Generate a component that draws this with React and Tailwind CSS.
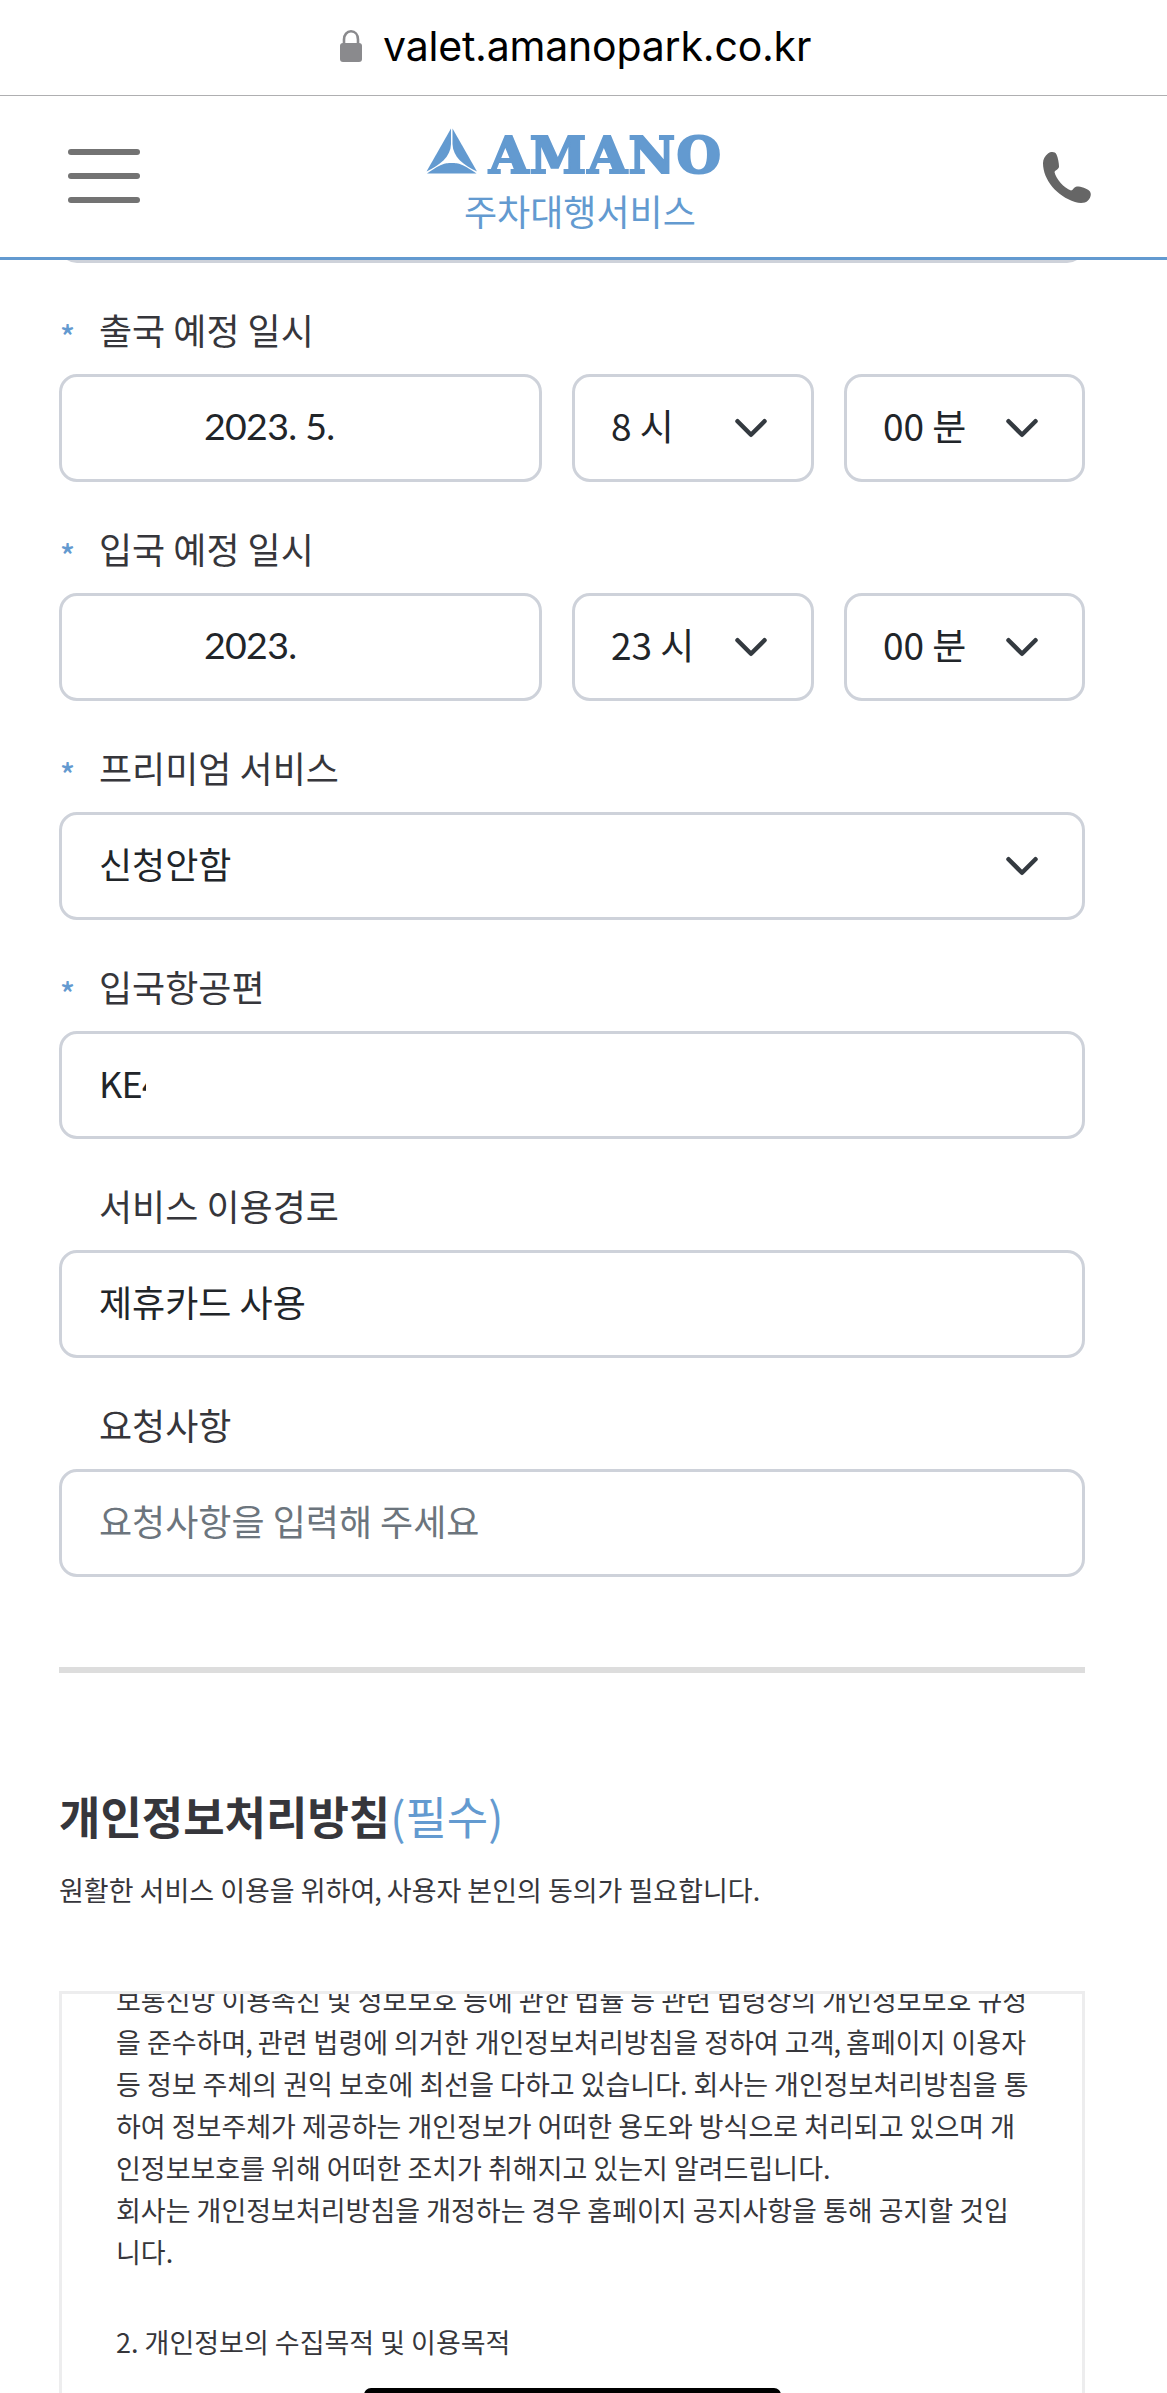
import React from "react";

const Chevron = () => (
  <svg viewBox="0 0 16 16" className="h-9 w-9 shrink-0" fill="none">
    <path
      d="m2 5 6 6 6-6"
      stroke="#343a40"
      strokeWidth="2"
      strokeLinecap="round"
      strokeLinejoin="round"
    />
  </svg>
);

const Label = ({ children, required }) => (
  <div className="flex h-[111px] items-center pt-[20px] text-[36px] text-[#36363b]">
    <span className="w-10 pt-[15px] pl-[1px] text-[31px] font-medium text-[#639ad0]">
      {required ? "*" : ""}
    </span>
    <span>{children}</span>
  </div>
);

const Field = ({ children, className = "pl-[37px]" }) => (
  <div
    className={`flex h-[108px] items-center rounded-[18px] border-3 border-[#ced2da] pr-[42px] text-[36px] leading-[54px] text-[#212529] ${className}`}
  >
    {children}
  </div>
);

const Select = ({ value, className }) => (
  <Field className={className}>
    <span className="flex-1 pb-[6px] whitespace-nowrap">{value}</span>
    <Chevron />
  </Field>
);

// Sets commas a little tighter than the font does
const Line = ({ text }) =>
  text.split(",").map((part, index) => (
    <React.Fragment key={index}>
      {index > 0 && <span className="-ml-[1px] tracking-[-1px]">,</span>}
      {part}
    </React.Fragment>
  ));

const schedules = [
  { label: "출국 예정 일시", date: "2023. 5.", hour: "8 시", minute: "00 분" },
  { label: "입국 예정 일시", date: "2023.", hour: "23 시", minute: "00 분" },
];

const policyLines = [
  "보통신망 이용촉진 및 정보보호 등에 관한 법률 등 관련 법령상의 개인정보보호 규정",
  "을 준수하며, 관련 법령에 의거한 개인정보처리방침을 정하여 고객, 홈페이지 이용자",
  "등 정보 주체의 권익 보호에 최선을 다하고 있습니다. 회사는 개인정보처리방침을 통",
  "하여 정보주체가 제공하는 개인정보가 어떠한 용도와 방식으로 처리되고 있으며 개",
  "인정보보호를 위해 어떠한 조치가 취해지고 있는지 알려드립니다.",
  "회사는 개인정보처리방침을 개정하는 경우 홈페이지 공지사항을 통해 공지할 것입",
  "니다.",
];

const AddressBar = () => (
  <div className="flex h-24 items-start border-b border-[#afafb1] pt-[16px] pl-[340px]">
    <svg viewBox="0 0 22 32" className="mt-[14px] h-8 w-[22px]">
      <path
        d="M4 15V9.5C4 4.5 7 1.3 11 1.3S18 4.5 18 9.5V15"
        fill="none"
        stroke="#8a8a8d"
        strokeWidth="2.6"
      />
      <rect y="13" width="22" height="19" rx="3" fill="#8a8a8d" />
    </svg>
    <span className="ml-[21px] font-['Inter'] text-[41px] leading-[60px] tracking-[-0.2px] text-black">
      valet.amanopark.co.kr
    </span>
  </div>
);

const Header = () => (
  <header className="flex h-[164px] items-start border-b-3 border-[#639ad0] pl-[68px]">
    <div className="mt-[53px] flex w-[72px] flex-col gap-[18px]">
      <div className="h-[6px] rounded-full bg-[#737373]"></div>
      <div className="h-[6px] rounded-full bg-[#737373]"></div>
      <div className="h-[6px] rounded-full bg-[#737373]"></div>
    </div>

    <div className="mt-[32px] ml-[286px] w-[294px] text-[#639ad0]">
      <div className="flex h-[54px]">
        <svg viewBox="0 0 51 46" className="h-[46px] w-[51px] shrink-0" fill="currentColor">
          <path d="M25 0.5V16C24.6 29 14 37 0.5 43.5Z" />
          <path d="M26.5 0.5V16C27 29 37 37 51 43.5Z" />
          <path d="M1 45.5C15 36 18 35 25.7 35S36 36 50.5 45.5Z" />
        </svg>
        <span className="ml-[12px] font-['DejaVu_Serif'] text-[51px] leading-[54px] font-bold tracking-[1.3px] [-webkit-text-stroke:2.2px_#639ad0]">
          AMANO
        </span>
      </div>
      <div className="pl-[38px] text-[36px] leading-[56px] whitespace-nowrap">
        주차대행서비스
      </div>
    </div>

    <svg viewBox="0 0 48 51" className="mt-[56px] ml-[323px] h-[51px] w-12" fill="#666666">
      <path d="M5 1.5C8-0.5 12-0.5 13.5 2.5C15 6 16 11 16 14.5C16 17 12 18.5 11.5 20C13 27 21 36 28 38.5C30 38.5 31 34.5 34 34.5C38 34.5 44 36.5 46.5 39C49 42 47.5 46 45 48.5C42 51.5 37 51.5 32 50C14 44 0 28 0 11C0 7 2 4 5 1.5Z" />
    </svg>
  </header>
);

const App = () => {
  return (
    <div className="relative h-[2393px] w-[1167px] overflow-hidden bg-white font-['Noto_Sans_CJK_KR',sans-serif]">
      <AddressBar />
      <Header />

      <main className="pr-[82px] pl-[59px]">
        {/* Bottom edge of the field scrolled under the header */}
        <div className="h-[3px] overflow-hidden">
          <div className="-mt-[33px] h-9 rounded-[18px] border-3 border-[#ced2da]"></div>
        </div>

        {schedules.map((item) => (
          <div key={item.label}>
            <Label required>{item.label}</Label>
            <div className="grid grid-cols-[483px_242px_241px] gap-[30px]">
              <Field className="pl-[142px]">
                <span className="pb-[4px] font-['Lato'] text-[37.5px] tracking-[-0.7px]">
                  {item.date}
                </span>
              </Field>
              <Select value={item.hour} className="pl-[36px] text-[37px]" />
              <Select value={item.minute} className="pl-[36px] text-[37px]" />
            </div>
          </div>
        ))}

        <Label required>프리미엄 서비스</Label>
        <Select value="신청안함" className="pl-[37px]" />

        <Label required>입국항공편</Label>
        <Field>
          <span className="w-[47px] overflow-hidden pb-[6px] tracking-[-0.7px]">
            KE4
          </span>
        </Field>

        <Label>서비스 이용경로</Label>
        <Field>
          <span className="pb-[6px]">제휴카드 사용</span>
        </Field>

        <Label>요청사항</Label>
        <Field>
          <span className="pb-[6px] text-[#6c757d]">요청사항을 입력해 주세요</span>
        </Field>

        <hr className="mt-[90px] border-t-6 border-[#dddddd]" />

        <h2 className="mt-[109px] text-[45px] leading-[68px] font-bold text-[#36363b]">
          개인정보처리방침
          <span className="font-normal text-[#639ad0]">(필수)</span>
        </h2>
        <p className="mt-[19px] text-[27px] leading-[42px] text-[#36363b]">
          <Line text="원활한 서비스 이용을 위하여, 사용자 본인의 동의가 필요합니다." />
        </p>

        <section className="mt-[80px] h-[420px] overflow-hidden border-3 border-[#ededee] pl-[54px] text-[27px] leading-[42px] whitespace-nowrap text-[#36363b]">
          <div className="-mt-[15px]">
            {policyLines.map((line) => (
              <p key={line}>
                <Line text={line} />
              </p>
            ))}
          </div>
          <p className="mt-[48px]">2. 개인정보의 수집목적 및 이용목적</p>
        </section>
      </main>

      {/* Home indicator */}
      <div className="absolute -bottom-[9px] left-[364px] h-[14px] w-[417px] rounded-full bg-black"></div>
    </div>
  );
};

export default App;
